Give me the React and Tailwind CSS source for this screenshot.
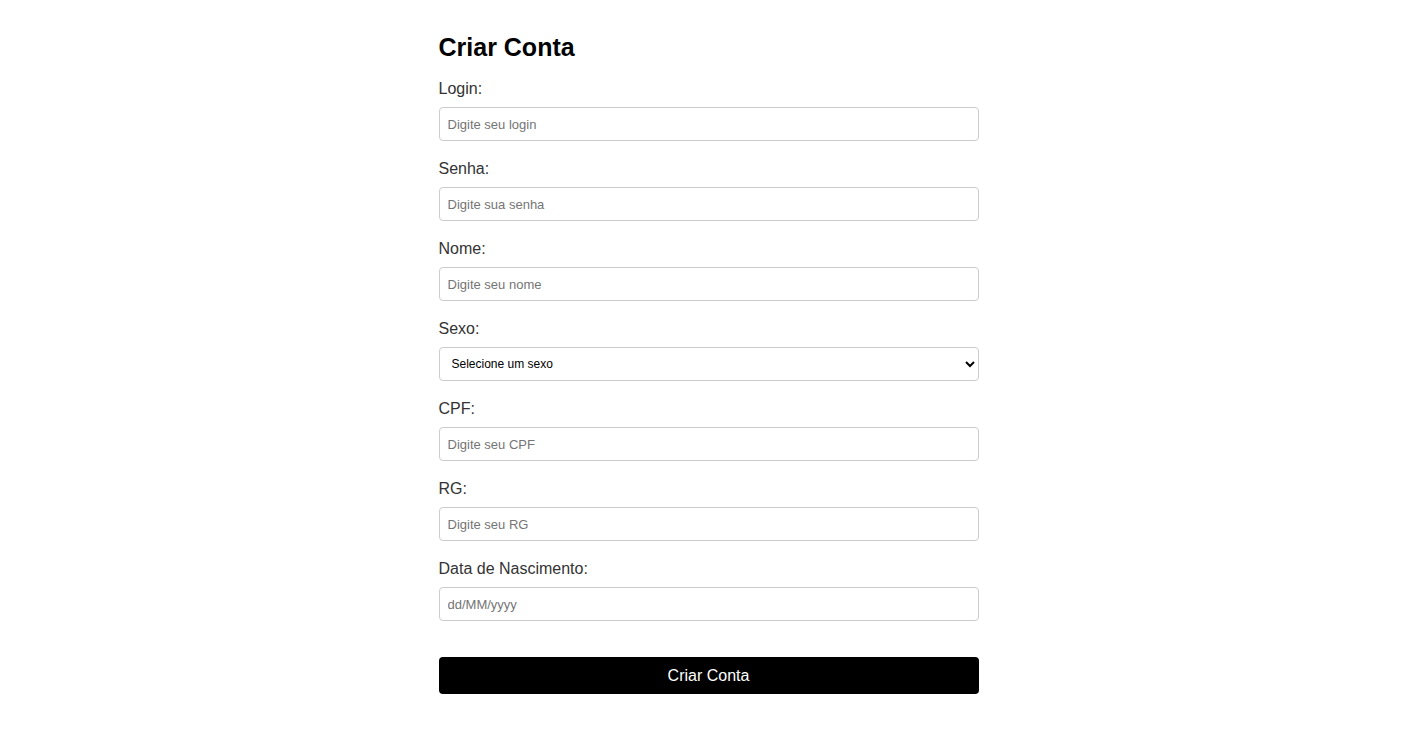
import React from "react";

const fields = [
  { label: "Login:", placeholder: "Digite seu login", type: "text" },
  { label: "Senha:", placeholder: "Digite sua senha", type: "password" },
  { label: "Nome:", placeholder: "Digite seu nome", type: "text" },
  { label: "Sexo:", select: true },
  { label: "CPF:", placeholder: "Digite seu CPF", type: "text" },
  { label: "RG:", placeholder: "Digite seu RG", type: "text" },
  { label: "Data de Nascimento:", placeholder: "dd/MM/yyyy", type: "text" },
];

export default function App() {
  return (
    <div
      className="min-h-[735px] bg-white"
      style={{ fontFamily: '"Liberation Sans", Arial, sans-serif' }}
    >
      <form
        className="mx-auto w-[540px] pt-[33px] flex flex-col"
        onSubmit={(e) => e.preventDefault()}
      >
        <h2 className="text-[25px] leading-[28px] font-bold text-black mb-[18px]">
          Criar Conta
        </h2>
        {fields.map((f) => (
          <div key={f.label} className="flex flex-col mb-[18px]">
            <label className="text-[16px] leading-[18px] text-[#333] pt-[1px] mb-[9px]">
              {f.label}
            </label>
            {f.select ? (
              <select
                defaultValue=""
                className="h-[34px] w-full border border-[#ccc] rounded-[4px] pl-[8px] pr-[6px] text-[12px] text-black bg-white"
              >
                <option value="">Selecione um sexo</option>
                <option value="M">Masculino</option>
                <option value="F">Feminino</option>
              </select>
            ) : (
              <input
                type={f.type}
                placeholder={f.placeholder}
                className="h-[34px] w-full border border-[#ccc] rounded-[4px] px-[8px] text-[13px] text-black placeholder:text-[#757575] outline-none"
              />
            )}
          </div>
        ))}
        <button
          type="submit"
          className="mt-[18px] h-[37px] w-full bg-black text-white text-[16px] rounded-[4px]"
        >
          Criar Conta
        </button>
      </form>
    </div>
  );
}
